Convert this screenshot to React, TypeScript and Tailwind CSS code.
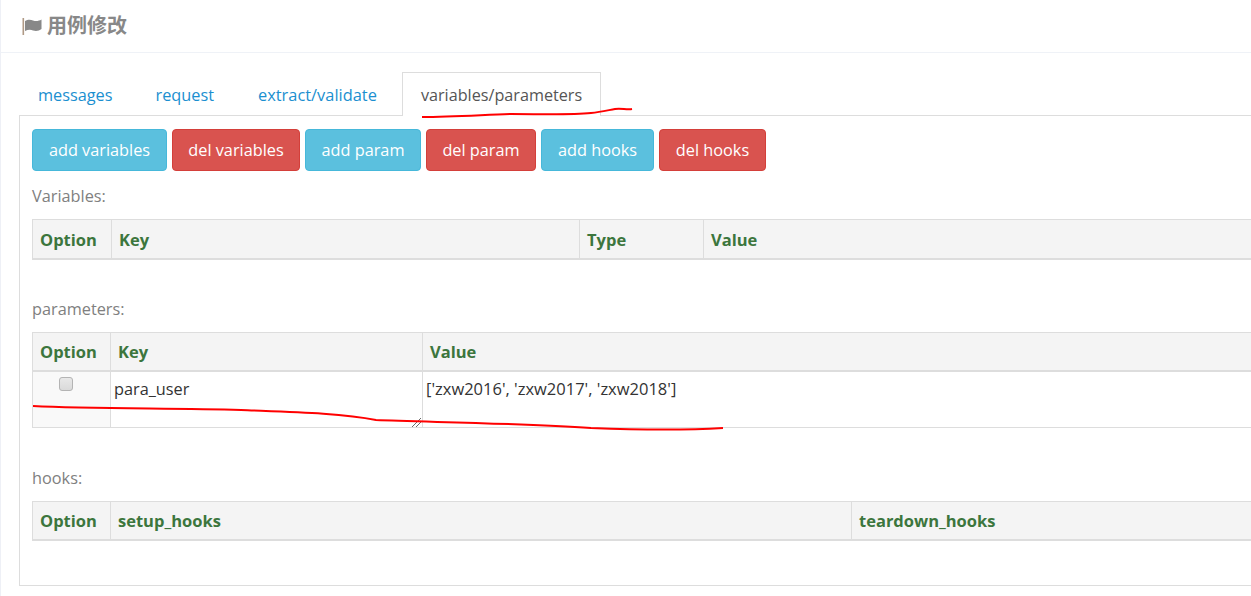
const fontStack = { fontFamily: '"Open Sans", "Noto Sans CJK SC", sans-serif' };

function FlagIcon() {
  return (
    <svg className="h-[17px] w-[20px]" viewBox="0 0 20 17" fill="#888">
      <rect x="0.5" y="0" width="1.6" height="17" fill="#b09a86" />
      <path d="M3 3 C6 1 9 1.5 11 2.5 C14 3.5 17 3 19.5 1.5 L19.5 11 C17 13 14 13.5 11 12.5 C9 11.5 6 11.5 3 13 Z" />
    </svg>
  );
}

function Th({ children, width }: { children: React.ReactNode; width?: string }) {
  return (
    <th className={`h-[39px] border border-[#ddd] border-b-2 border-b-[#ddd] bg-[#f4f4f4] px-[7px] pt-[3px] text-left text-[16.5px] font-bold text-[#3c763d] ${width ?? ''}`}>
      {children}
    </th>
  );
}

function HeaderTable({ cols }: { cols: { label: string; width: string }[] }) {
  return (
    <table className="w-[1300px] table-fixed border-collapse">
      <thead>
        <tr>
          {cols.map((c) => (
            <Th key={c.label} width={c.width}>
              {c.label}
            </Th>
          ))}
        </tr>
      </thead>
    </table>
  );
}

function ActionButton({ label, width, danger }: { label: string; width: string; danger?: boolean }) {
  return (
    <button
      className={`h-[42px] rounded-[4px] border text-center text-[16.3px] text-white ${width} ${
        danger ? 'border-[#d43f3a] bg-[#d9534f]' : 'border-[#46b8da] bg-[#5bc0de]'
      }`}
    >
      {label}
    </button>
  );
}

export default function App() {
  return (
    <div className="relative h-[596px] w-[1251px] overflow-hidden border-l border-[#eef0f6] bg-white" style={fontStack}>
      <div className="flex h-[53px] items-center border-b border-[#eff2f7] pl-[21px]">
        <h1 className="flex items-center gap-[5px] text-[20px] font-bold text-[#888]">
          <FlagIcon />
          用例修改
        </h1>
      </div>

      <div className="pl-[18px] pt-[19px]">
        <div className="flex h-[43px] w-[1300px] items-end">
          <a className="flex h-[43px] items-center px-[19px] pt-[4px] text-[16.3px] text-[#1b8fd0]">messages</a>
          <a className="ml-[5px] flex h-[43px] items-center px-[19px] pt-[4px] text-[16.3px] text-[#1b8fd0]">request</a>
          <a className="ml-[6px] flex h-[43px] items-center px-[19px] pt-[4px] text-[16.4px] text-[#1b8fd0]">extract/validate</a>
          <a className="relative z-10 ml-[6px] -mb-px flex h-[44px] items-center border border-b-0 border-[#ddd] bg-white px-[18px] pt-[1px] text-[16.2px] text-[#555]">
            variables/parameters
          </a>
        </div>

        <div className="h-[471px] w-[1300px] border border-[#ddd] pl-[12px] pt-[13px]">
          <div className="flex gap-[5px]">
            <ActionButton label="add variables" width="w-[135px]" />
            <ActionButton label="del variables" width="w-[128px]" danger />
            <ActionButton label="add param" width="w-[116px]" />
            <ActionButton label="del param" width="w-[110px]" danger />
            <ActionButton label="add hooks" width="w-[113px]" />
            <ActionButton label="del hooks" width="w-[107px]" danger />
          </div>

          <p className="mt-[14px] h-[34px] text-[16.3px] leading-[22px] text-[#808080]">Variables:</p>
          <HeaderTable
            cols={[
              { label: 'Option', width: 'w-[79px]' },
              { label: 'Key', width: 'w-[468px]' },
              { label: 'Type', width: 'w-[124px]' },
              { label: 'Value', width: 'w-auto' },
            ]}
          />

          <p className="mt-[38px] h-[34px] text-[16.3px] leading-[22px] text-[#808080]">parameters:</p>
          <table className="w-[1300px] table-fixed border-collapse">
            <thead>
              <tr>
                <Th width="w-[78px]">Option</Th>
                <Th width="w-[312px]">Key</Th>
                <Th>Value</Th>
              </tr>
            </thead>
            <tbody>
              <tr>
                <td className="h-[56px] border border-[#ddd] bg-[#f9f9f9] align-top">
                  <div className="pl-[26px] pt-[5px]">
                    <div className="h-[14px] w-[14px] rounded-[3px] border border-[#b4b4b4] bg-gradient-to-b from-[#e8e8e8] to-[#dadada]" />
                  </div>
                </td>
                <td className="relative border border-[#ddd] pl-[3px] pt-[5px] align-top text-[16.3px] leading-[24px] text-[#333]">
                  para_user
                  <svg className="absolute bottom-0 right-0 h-[10px] w-[10px]" viewBox="0 0 10 10">
                    <path d="M0 10 L9 1 M4 10 L10 4" stroke="#444" strokeWidth="0.8" />
                  </svg>
                </td>
                <td className="border border-[#ddd] pl-[3px] pt-[5px] align-top text-[16.5px] leading-[24px] text-[#333]">
                  ['zxw2016', 'zxw2017', 'zxw2018']
                </td>
              </tr>
            </tbody>
          </table>

          <p className="mt-[39px] h-[34px] text-[16.3px] leading-[22px] text-[#808080]">hooks:</p>
          <HeaderTable
            cols={[
              { label: 'Option', width: 'w-[78px]' },
              { label: 'setup_hooks', width: 'w-[741px]' },
              { label: 'teardown_hooks', width: 'w-auto' },
            ]}
          />
        </div>
      </div>

      <svg className="pointer-events-none absolute left-0 top-0 z-20 h-[596px] w-[1251px]" viewBox="0 0 1251 596" fill="none" stroke="#f00" strokeWidth="2">
        <path d="M421 117 C450 117 480 115 510 114 C540 114 570 115 590 113 C600 112 608 110 614 109 C620 108 626 110 631 109" />
        <path d="M32 406 C90 409 170 408 240 410 C290 412 340 413 375 420 C420 422 520 423 590 428 C640 430 690 430 722 428" />
      </svg>
    </div>
  );
}
